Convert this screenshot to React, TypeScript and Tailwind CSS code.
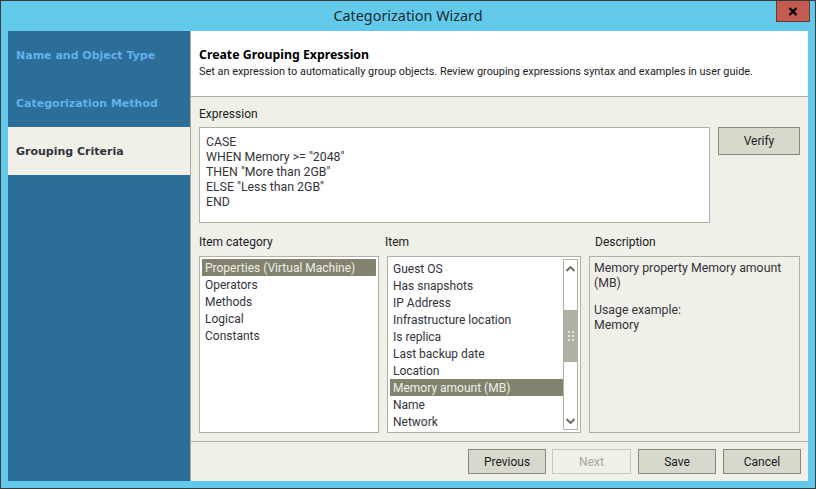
const categories = ["Properties (Virtual Machine)", "Operators", "Methods", "Logical", "Constants"];
const items = [
  "Guest OS",
  "Has snapshots",
  "IP Address",
  "Infrastructure location",
  "Is replica",
  "Last backup date",
  "Location",
  "Memory amount (MB)",
  "Name",
  "Network",
];
const expression = ["CASE", 'WHEN Memory >= "2048"', 'THEN "More than 2GB"', 'ELSE "Less than 2GB"', "END"];

function ListRow({ label, selected }: { label: string; selected?: boolean }) {
  return (
    <div className={`h-[17px] pl-[3px] leading-[19px] whitespace-nowrap ${selected ? "bg-[#82826f] text-[#f0efe8]" : "text-[#33333b]"}`}>
      {label}
    </div>
  );
}

function WizardButton({ label, disabled, className }: { label: string; disabled?: boolean; className?: string }) {
  return (
    <div
      className={`flex h-[25px] items-center justify-center border ${
        disabled ? "border-[#c8c8be] text-[#a8a8a0]" : "border-[#86867a] bg-[#d8d8cc] text-[#1c1c24]"
      } ${className ?? "w-[78px]"}`}
    >
      {label}
    </div>
  );
}

function Scrollbar() {
  return (
    <div className="flex w-[15px] flex-col border border-[#b0b0a6] bg-white">
      <div className="flex h-[17px] items-center justify-center">
        <svg width="9" height="6" viewBox="0 0 9 6">
          <path d="M0.5 5 L4.5 1 L8.5 5" fill="none" stroke="#6f6f63" strokeWidth="2" />
        </svg>
      </div>
      <div className="mt-[33px] flex h-[52px] items-center justify-center bg-[#b0b0a6]">
        <div className="grid grid-cols-2 gap-x-[2px] gap-y-[2px]">
          {[0, 1, 2, 3, 4, 5].map((i) => (
            <div key={i} className="h-[2px] w-[2px] bg-[#e4e4dc]" />
          ))}
        </div>
      </div>
      <div className="flex-1" />
      <div className="flex h-[17px] items-center justify-center">
        <svg width="9" height="6" viewBox="0 0 9 6">
          <path d="M0.5 1 L4.5 5 L8.5 1" fill="none" stroke="#6f6f63" strokeWidth="2" />
        </svg>
      </div>
    </div>
  );
}

export default function App() {
  return (
    <div className="flex h-[489px] w-[816px] flex-col border border-[#3a3a3a] bg-[#63c9ea] font-['Roboto',sans-serif] text-[12px] text-[#1c1c24]">
      <div className="relative h-[30px] shrink-0">
        <div className="text-center font-['Noto_Sans',sans-serif] text-[14.4px] leading-[29px] text-[#1a2a33]">Categorization Wizard</div>
        <div className="absolute top-0 right-[5px] flex h-[21px] w-[34px] items-center justify-center border border-t-0 border-[#6b3a34] bg-[#c45b50]">
          <svg width="10" height="9" viewBox="0 0 10 9">
            <path d="M1.5 1 L8.5 8 M8.5 1 L1.5 8" fill="none" stroke="#000" strokeWidth="2.4" />
          </svg>
        </div>
      </div>

      <div className="mx-[7px] flex h-[450px] shrink-0">
        <div className="flex w-[182px] shrink-0 flex-col bg-[#2d6e99] font-['DejaVu_Sans',sans-serif] text-[11px] font-bold">
          <div className="flex h-[48px] items-center pt-[2px] pl-[8px] text-[#63b0ea]">Name and Object Type</div>
          <div className="flex h-[48px] items-center pt-[2px] pl-[8px] text-[#63b0ea]">Categorization Method</div>
          <div className="flex h-[48px] items-center bg-[#f0efe8] pt-[2px] pl-[8px] text-[#33333b]">Grouping Criteria</div>
        </div>

        <div className="flex flex-1 flex-col border-l border-[#a8a8a0] bg-[#f0efe8]">
          <div className="h-[66px] shrink-0 border-b border-[#b0b0a6] bg-white pt-[15px] pl-[8px]">
            <div className="font-['Noto_Sans',sans-serif] text-[12.3px] leading-[17px] font-bold text-black">Create Grouping Expression</div>
            <div className="mt-[1px] text-[10.9px] leading-[16px] whitespace-nowrap text-[#1c1c24]">
              Set an expression to automatically group objects. Review grouping expressions syntax and examples in user guide.
            </div>
          </div>

          <div className="flex flex-1 flex-col px-[8px] pt-[9px]">
            <div className="h-[21px] leading-[16px]">Expression</div>
            <div className="flex gap-[8px]">
              <div className="h-[96px] w-[511px] border border-[#b0b0a6] bg-white pt-[7px] pl-[6px] text-[12.3px] leading-[15px] text-[#33333b]">
                {expression.map((line) => (
                  <div key={line}>{line}</div>
                ))}
              </div>
              <WizardButton label="Verify" className="h-[28px] w-[82px]" />
            </div>

            <div className="mt-[11px] flex h-[22px] leading-[16px]">
              <div className="w-[186px]">Item category</div>
              <div className="w-[210px]">Item</div>
              <div>Description</div>
            </div>

            <div className="flex h-[177px] gap-[8px]">
              <div className="w-[180px] border border-[#b0b0a6] bg-white p-[2px]">
                {categories.map((c, i) => (
                  <ListRow key={c} label={c} selected={i === 0} />
                ))}
              </div>
              <div className="flex w-[194px] border border-[#b0b0a6] bg-white p-[2px]">
                <div className="flex-1 pt-[1px]">
                  {items.map((item) => (
                    <ListRow key={item} label={item} selected={item === "Memory amount (MB)"} />
                  ))}
                </div>
                <Scrollbar />
              </div>
              <div className="w-[211px] border border-[#b0b0a6] pt-[4px] pl-[4px] text-[12.3px] leading-[15px] text-[#33333b]">
                <div>Memory property Memory amount</div>
                <div>(MB)</div>
                <div className="mt-[12px]">Usage example:</div>
                <div>Memory</div>
              </div>
            </div>
          </div>

          <div className="flex h-[40px] shrink-0 items-start gap-[6px] border-t border-[#b0b0a6] pt-[7px] pl-[277px]">
            <WizardButton label="Previous" />
            <WizardButton label="Next" disabled className="w-[79px]" />
            <WizardButton label="Save" className="ml-[1px] w-[78px]" />
            <WizardButton label="Cancel" className="ml-[1px] w-[78px]" />
          </div>
        </div>
      </div>
    </div>
  );
}
